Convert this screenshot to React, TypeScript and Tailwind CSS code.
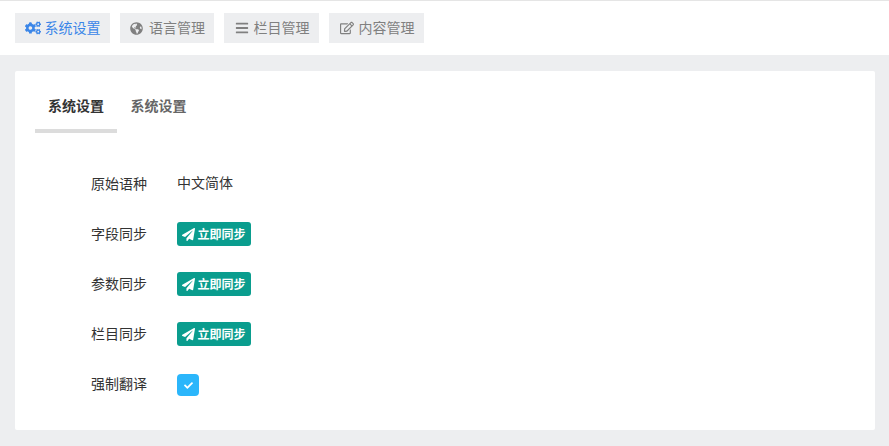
import React from 'react';
import { FaCogs, FaGlobeAmericas, FaBars, FaRegEdit, FaPaperPlane, FaCheck } from 'react-icons/fa';

const topTabs = [
  { label: '系统设置', icon: <FaCogs className="text-[16px]" />, active: true, width: 'w-[95px]', gap: 'gap-[4px] pl-0' },
  { label: '语言管理', icon: <FaGlobeAmericas className="text-[13px]" />, active: false, width: 'w-[94px]', gap: 'gap-[6px] pl-[1px]' },
  { label: '栏目管理', icon: <FaBars className="text-[14px]" />, active: false, width: 'w-[95px]', gap: 'gap-[5px] pl-[1px]' },
  { label: '内容管理', icon: <FaRegEdit className="text-[14px]" />, active: false, width: 'w-[95px]', gap: 'gap-[5px] pl-[1px]' },
];

const SyncButton = () => (
  <button className="flex items-center justify-center gap-[2px] w-[74px] h-[24px] rounded-[3px] bg-[#0a9d8e] text-white text-[12px] font-bold leading-none">
    <FaPaperPlane className="text-[13px]" />
    <span className="pt-[2px]">立即同步</span>
  </button>
);

const Row = ({ label, children }: { label: string; children: React.ReactNode }) => (
  <div className="flex items-center h-[50px]">
    <div className="w-[86px] text-[14px] text-[#333]">{label}</div>
    {children}
  </div>
);

export default function App() {
  return (
    <div className="w-[889px] h-[446px] bg-[#edeef0] overflow-hidden font-['Liberation_Sans','Noto_Sans_CJK_SC',sans-serif]">
      <div className="h-[55px] bg-white border-t border-[#e5e5e5] flex items-start gap-[10px] pl-[15px] pt-[12px]">
        {topTabs.map((tab) => (
          <div
            key={tab.label}
            className={`flex items-center justify-center h-[30px] bg-[#edeef0] text-[14px] ${tab.gap} ${tab.width} ${
              tab.active ? 'text-[#3b86e8]' : 'text-[#808080]'
            }`}
          >
            {tab.icon}
            {tab.label}
          </div>
        ))}
      </div>
      <div className="ml-[15px] mr-[14px] mt-[16px] h-[359px] bg-white rounded-[2px]">
        <div className="flex pl-[20px] pt-[16px]">
          <div className="w-[82px] h-[46px] pt-[9px] text-center text-[14px] font-bold text-[#333] border-b-4 border-[#dcdcdc]">系统设置</div>
          <div className="w-[82px] h-[46px] pt-[9px] pl-[1px] text-center text-[14px] font-bold text-[#666]">系统设置</div>
        </div>
        <div className="pl-[76px] pt-[26px]">
          <Row label="原始语种">
            <span className="text-[14px] text-[#333] mb-[2px]">中文简体</span>
          </Row>
          <Row label="字段同步">
            <SyncButton />
          </Row>
          <Row label="参数同步">
            <SyncButton />
          </Row>
          <Row label="栏目同步">
            <SyncButton />
          </Row>
          <Row label="强制翻译">
            <div className="flex items-center justify-center w-[22px] h-[22px] mt-[2px] rounded-[4px] bg-[#2bb6fb] text-white">
              <FaCheck className="text-[9px]" />
            </div>
          </Row>
        </div>
      </div>
    </div>
  );
}
